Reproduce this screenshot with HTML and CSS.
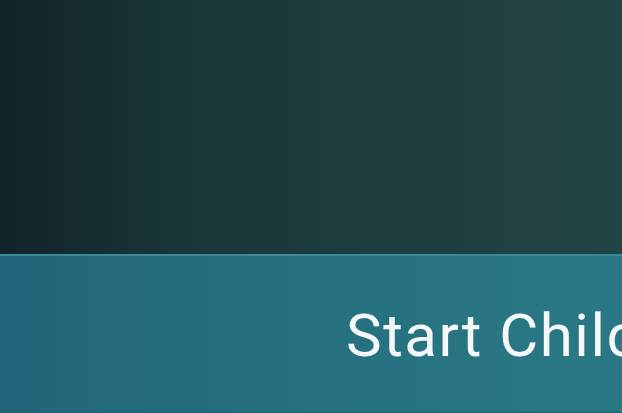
FILE: index.html
```html
<!DOCTYPE html>
<html>
<head>
<meta charset="utf-8">
<link rel="stylesheet" href="styles.css">
</head>
<body>
<div class="screen">
  <div class="hero"></div>
  <div class="band">
    <span class="title">Start Child</span>
  </div>
</div>
</body>
</html>
```
FILE: styles.css
```css
html, body {
  margin: 0;
  padding: 0;
  width: 622px;
  height: 413px;
  overflow: hidden;
}
.screen {
  display: flex;
  flex-direction: column;
  width: 622px;
  height: 413px;
}
.hero {
  height: 254px;
  flex: none;
  background: linear-gradient(90deg, #12242a 0%, #1a3639 30%, #1e3f40 70%, #214444 100%);
}
.band {
  flex: 1;
  border-top: 2px solid #3b8a9a;
  border-bottom: 1px solid #215f70;
  background: linear-gradient(90deg, #22657a 0%, #26707f 50%, #2a7886 100%);
  display: flex;
  align-items: flex-start;
  padding-left: 346px;
  padding-top: 45px;
  box-sizing: border-box;
  overflow: hidden;
}
.title {
  font-family: Roboto, "Noto Sans", sans-serif;
  font-size: 60px;
  line-height: 70px;
  letter-spacing: 1.5px;
  color: #f4f8f8;
  white-space: nowrap;
}
```
